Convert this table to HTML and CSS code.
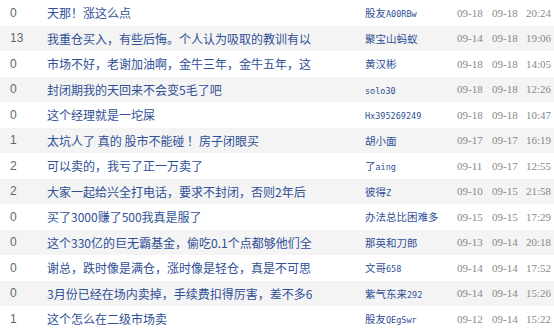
FILE: index.html
```html
<!DOCTYPE html>
<html lang="zh-CN">
<head>
<meta charset="utf-8">
<title>帖子列表</title>
<link rel="stylesheet" href="styles.css">
</head>
<body>
<div class="list">
  <div class="row"><span class="cnt">0</span><a class="title">天那！涨这么点</a><a class="author">股友<span class="lat">A00RBw</span></a><span class="d">09-18</span><span class="d">09-18</span><span class="d">20:24</span></div>
  <div class="row"><span class="cnt">13</span><a class="title">我重仓买入，有些后悔。个人认为吸取的教训有以</a><a class="author">聚宝山蚂蚁</a><span class="d">09-14</span><span class="d">09-18</span><span class="d">19:06</span></div>
  <div class="row"><span class="cnt">0</span><a class="title">市场不好，老谢加油啊，金牛三年，金牛五年，这</a><a class="author">黄汉彬</a><span class="d">09-18</span><span class="d">09-18</span><span class="d">14:05</span></div>
  <div class="row"><span class="cnt">0</span><a class="title">封闭期我的天回来不会变5毛了吧</a><a class="author"><span class="lat">solo30</span></a><span class="d">09-18</span><span class="d">09-18</span><span class="d">12:26</span></div>
  <div class="row"><span class="cnt">0</span><a class="title">这个经理就是一坨屎</a><a class="author"><span class="lat">Hx395269249</span></a><span class="d">09-18</span><span class="d">09-18</span><span class="d">10:47</span></div>
  <div class="row"><span class="cnt">1</span><a class="title">太坑人了 真的 股市不能碰 ！房子闭眼买</a><a class="author">胡小面</a><span class="d">09-17</span><span class="d">09-17</span><span class="d">16:19</span></div>
  <div class="row"><span class="cnt">2</span><a class="title">可以卖的，我亏了正一万卖了</a><a class="author">了<span class="lat">aing</span></a><span class="d">09-11</span><span class="d">09-17</span><span class="d">12:55</span></div>
  <div class="row"><span class="cnt">2</span><a class="title">大家一起给兴全打电话，要求不封闭，否则2年后</a><a class="author">彼得<span class="lat">Z</span></a><span class="d">09-10</span><span class="d">09-15</span><span class="d">21:58</span></div>
  <div class="row"><span class="cnt">0</span><a class="title">买了3000赚了500我真是服了</a><a class="author">办法总比困难多</a><span class="d">09-15</span><span class="d">09-15</span><span class="d">17:29</span></div>
  <div class="row"><span class="cnt">0</span><a class="title">这个330亿的巨无霸基金，偷吃0.1个点都够他们全</a><a class="author">那英和刀郎</a><span class="d">09-13</span><span class="d">09-14</span><span class="d">20:18</span></div>
  <div class="row"><span class="cnt">0</span><a class="title">谢总，跌时像是满仓，涨时像是轻仓，真是不可思</a><a class="author">文哥<span class="lat">658</span></a><span class="d">09-14</span><span class="d">09-14</span><span class="d">17:52</span></div>
  <div class="row"><span class="cnt">0</span><a class="title">3月份已经在场内卖掉，手续费扣得厉害，差不多6</a><a class="author">紫气东来<span class="lat">292</span></a><span class="d">09-14</span><span class="d">09-14</span><span class="d">15:26</span></div>
  <div class="row"><span class="cnt">1</span><a class="title">这个怎么在二级市场卖</a><a class="author">股友<span class="lat">QEgSwr</span></a><span class="d">09-12</span><span class="d">09-14</span><span class="d">15:22</span></div>
</div>
</body>
</html>
```
FILE: styles.css
```css
html, body {
  margin: 0;
  padding: 0;
  background: #ffffff;
}
.list {
  display: flex;
  flex-direction: column;
}
.row {
  display: grid;
  grid-template-columns: 47px 318px 92px 35px 34px 1fr;
  align-items: center;
  height: 25.5px;
  white-space: nowrap;
  overflow: hidden;
}
.row:nth-child(even) {
  background: #f4f4f4;
}
.cnt {
  padding-left: 10px;
  font-family: "Liberation Sans", Arial, sans-serif;
  font-size: 12px;
  color: #666666;
}
.title {
  font-family: "Noto Sans CJK SC", sans-serif;
  font-size: 12px;
  color: #2f4f96;
  overflow: hidden;
}
.author {
  font-family: "Noto Sans CJK SC", sans-serif;
  font-size: 10.5px;
  color: #2f4f96;
  overflow: hidden;
}
.lat {
  font-family: "DejaVu Sans Mono", monospace;
  font-size: 8.5px;
}
.d {
  font-family: "Liberation Serif", "Noto Sans CJK SC", serif;
  font-size: 11px;
  color: #888888;
}
```
